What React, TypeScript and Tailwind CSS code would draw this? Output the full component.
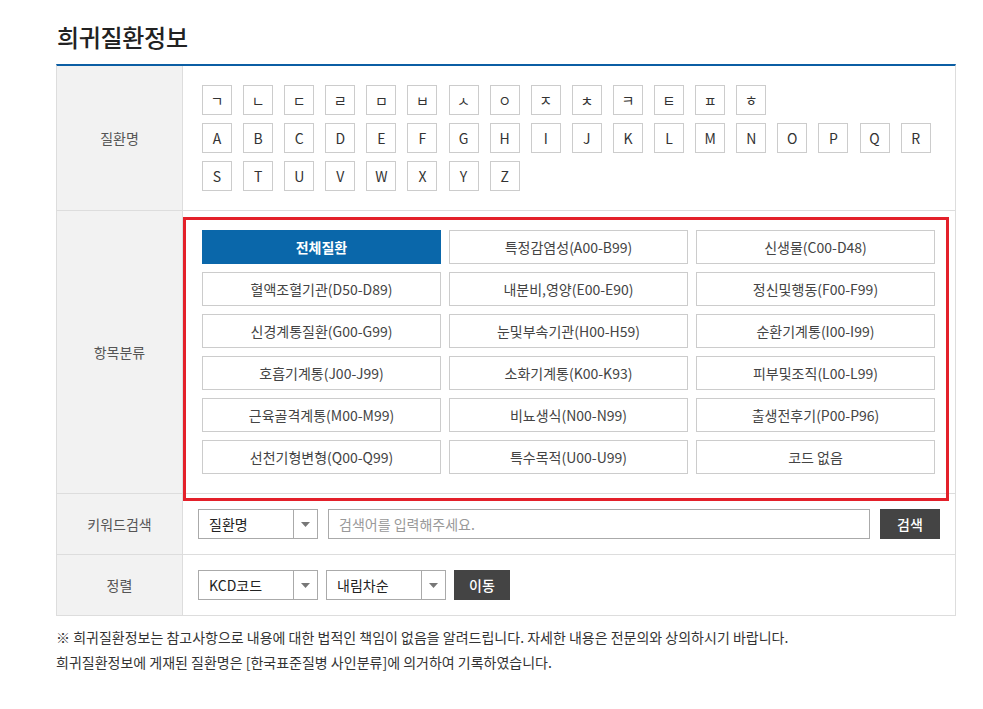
const consonants = ['ㄱ', 'ㄴ', 'ㄷ', 'ㄹ', 'ㅁ', 'ㅂ', 'ㅅ', 'ㅇ', 'ㅈ', 'ㅊ', 'ㅋ', 'ㅌ', 'ㅍ', 'ㅎ'];
const alphabet = 'ABCDEFGHIJKLMNOPQRSTUVWXYZ'.split('');

const categories = [
  '전체질환',
  '특정감염성(A00-B99)',
  '신생물(C00-D48)',
  '혈액조혈기관(D50-D89)',
  '내분비,영양(E00-E90)',
  '정신및행동(F00-F99)',
  '신경계통질환(G00-G99)',
  '눈및부속기관(H00-H59)',
  '순환기계통(I00-I99)',
  '호흡기계통(J00-J99)',
  '소화기계통(K00-K93)',
  '피부및조직(L00-L99)',
  '근육골격계통(M00-M99)',
  '비뇨생식(N00-N99)',
  '출생전후기(P00-P96)',
  '선천기형변형(Q00-Q99)',
  '특수목적(U00-U99)',
  '코드 없음'
];

function LetterButton({ label }: { label: string }) {
  return (
    <button className="w-[30px] h-[30px] border border-[#cccccc] bg-white text-[14px] text-[#333] flex items-center justify-center">
      {label}
    </button>
  );
}

function SelectBox({ value, width }: { value: string; width: string }) {
  return (
    <div className={`${width} h-[30px] border border-[#aaaaaa] flex bg-white`}>
      <div className="flex-1 flex items-center pl-[10px] text-[14px] text-[#222]">{value}</div>
      <div className="w-[24px] border-l border-[#aaaaaa] flex items-center justify-center">
        <svg width="9" height="5" viewBox="0 0 9 5">
          <path d="M0 0 L9 0 L4.5 5 Z" fill="#777" />
        </svg>
      </div>
    </div>
  );
}

export default function App() {
  return (
    <div
      className="w-[983px] h-[709px] bg-white text-[#333]"
      style={{ fontFamily: '"Noto Sans CJK KR", "Noto Sans", sans-serif' }}
    >
      <div className="pl-[56px] pr-[27px] pt-[20px]">
        <h1 className="text-[24px] font-medium text-[#222] leading-[34px] pl-[1px] tracking-[-0.3px]">희귀질환정보</h1>

        <div className="relative mt-[10px] border-t-2 border-[#0b5ea4] border-x border-b border-x-[#dddddd] border-b-[#dddddd]">
          {/* 질환명 */}
          <div className="flex border-b border-[#dddddd]">
            <div className="w-[126px] shrink-0 bg-[#f2f2f2] border-r border-[#dddddd] flex items-center justify-center text-[14px] text-[#555]">
              질환명
            </div>
            <div className="flex-1 pl-[19px] pt-[19px] pb-[19px] flex flex-col gap-[8px]">
              <div className="flex gap-[11.1px]">
                {consonants.map((c) => (
                  <LetterButton key={c} label={c} />
                ))}
              </div>
              <div className="flex flex-wrap gap-x-[11.1px] gap-y-[8px] w-[742px]">
                {alphabet.map((c) => (
                  <LetterButton key={c} label={c} />
                ))}
              </div>
            </div>
          </div>

          {/* 항목분류 */}
          <div className="flex border-b border-[#dddddd]">
            <div className="w-[126px] shrink-0 bg-[#f2f2f2] border-r border-[#dddddd] flex items-center justify-center text-[14px] text-[#555]">
              항목분류
            </div>
            <div className="flex-1 pl-[19px] pr-[20px] pt-[19px] pb-[19px]">
              <div className="grid grid-cols-3 gap-x-[8px] gap-y-[8px]">
                {categories.map((c, i) =>
                  i === 0 ? (
                    <button
                      key={c}
                      className="h-[34px] bg-[#0a67aa] text-white text-[14px] font-bold flex items-center justify-center"
                    >
                      {c}
                    </button>
                  ) : (
                    <button
                      key={c}
                      className="h-[34px] border border-[#cccccc] bg-white text-[14px] text-[#444] flex items-center justify-center"
                    >
                      {c}
                    </button>
                  )
                )}
              </div>
            </div>
          </div>

          {/* 키워드검색 */}
          <div className="flex border-b border-[#dddddd]">
            <div className="w-[126px] shrink-0 bg-[#f2f2f2] border-r border-[#dddddd] flex items-center justify-center text-[14px] text-[#555]">
              키워드검색
            </div>
            <div className="flex-1 pl-[15px] pr-[15px] py-[15px] flex items-center gap-[10px]">
              <SelectBox value="질환명" width="w-[120px]" />
              <input
                type="text"
                placeholder="검색어를 입력해주세요."
                className="w-[542px] h-[30px] border border-[#aaaaaa] px-[10px] text-[14px] placeholder:text-[#999] outline-none"
              />
              <button className="w-[60px] h-[30px] bg-[#444444] text-white text-[14px] font-medium">검색</button>
            </div>
          </div>

          {/* 정렬 */}
          <div className="flex">
            <div className="w-[126px] shrink-0 bg-[#f2f2f2] border-r border-[#dddddd] flex items-center justify-center text-[14px] text-[#555]">
              정렬
            </div>
            <div className="flex-1 pl-[15px] py-[15px] flex items-center">
              <SelectBox value="KCD코드" width="w-[120px]" />
              <div className="ml-[8px]">
                <SelectBox value="내림차순" width="w-[120px]" />
              </div>
              <button className="ml-[8px] w-[56px] h-[30px] bg-[#444444] text-white text-[14px] font-medium">이동</button>
            </div>
          </div>

          <div className="absolute left-[126px] top-[151px] w-[766px] h-[284px] border-[3px] border-[#e3202a] pointer-events-none" />
        </div>

        <div className="mt-[9px] text-[14px] text-[#333] leading-[25px]">
          <p>※ 희귀질환정보는 참고사항으로 내용에 대한 법적인 책임이 없음을 알려드립니다. 자세한 내용은 전문의와 상의하시기 바랍니다.</p>
          <p>희귀질환정보에 게재된 질환명은 [한국표준질병 사인분류]에 의거하여 기록하였습니다.</p>
        </div>
      </div>
    </div>
  );
}
